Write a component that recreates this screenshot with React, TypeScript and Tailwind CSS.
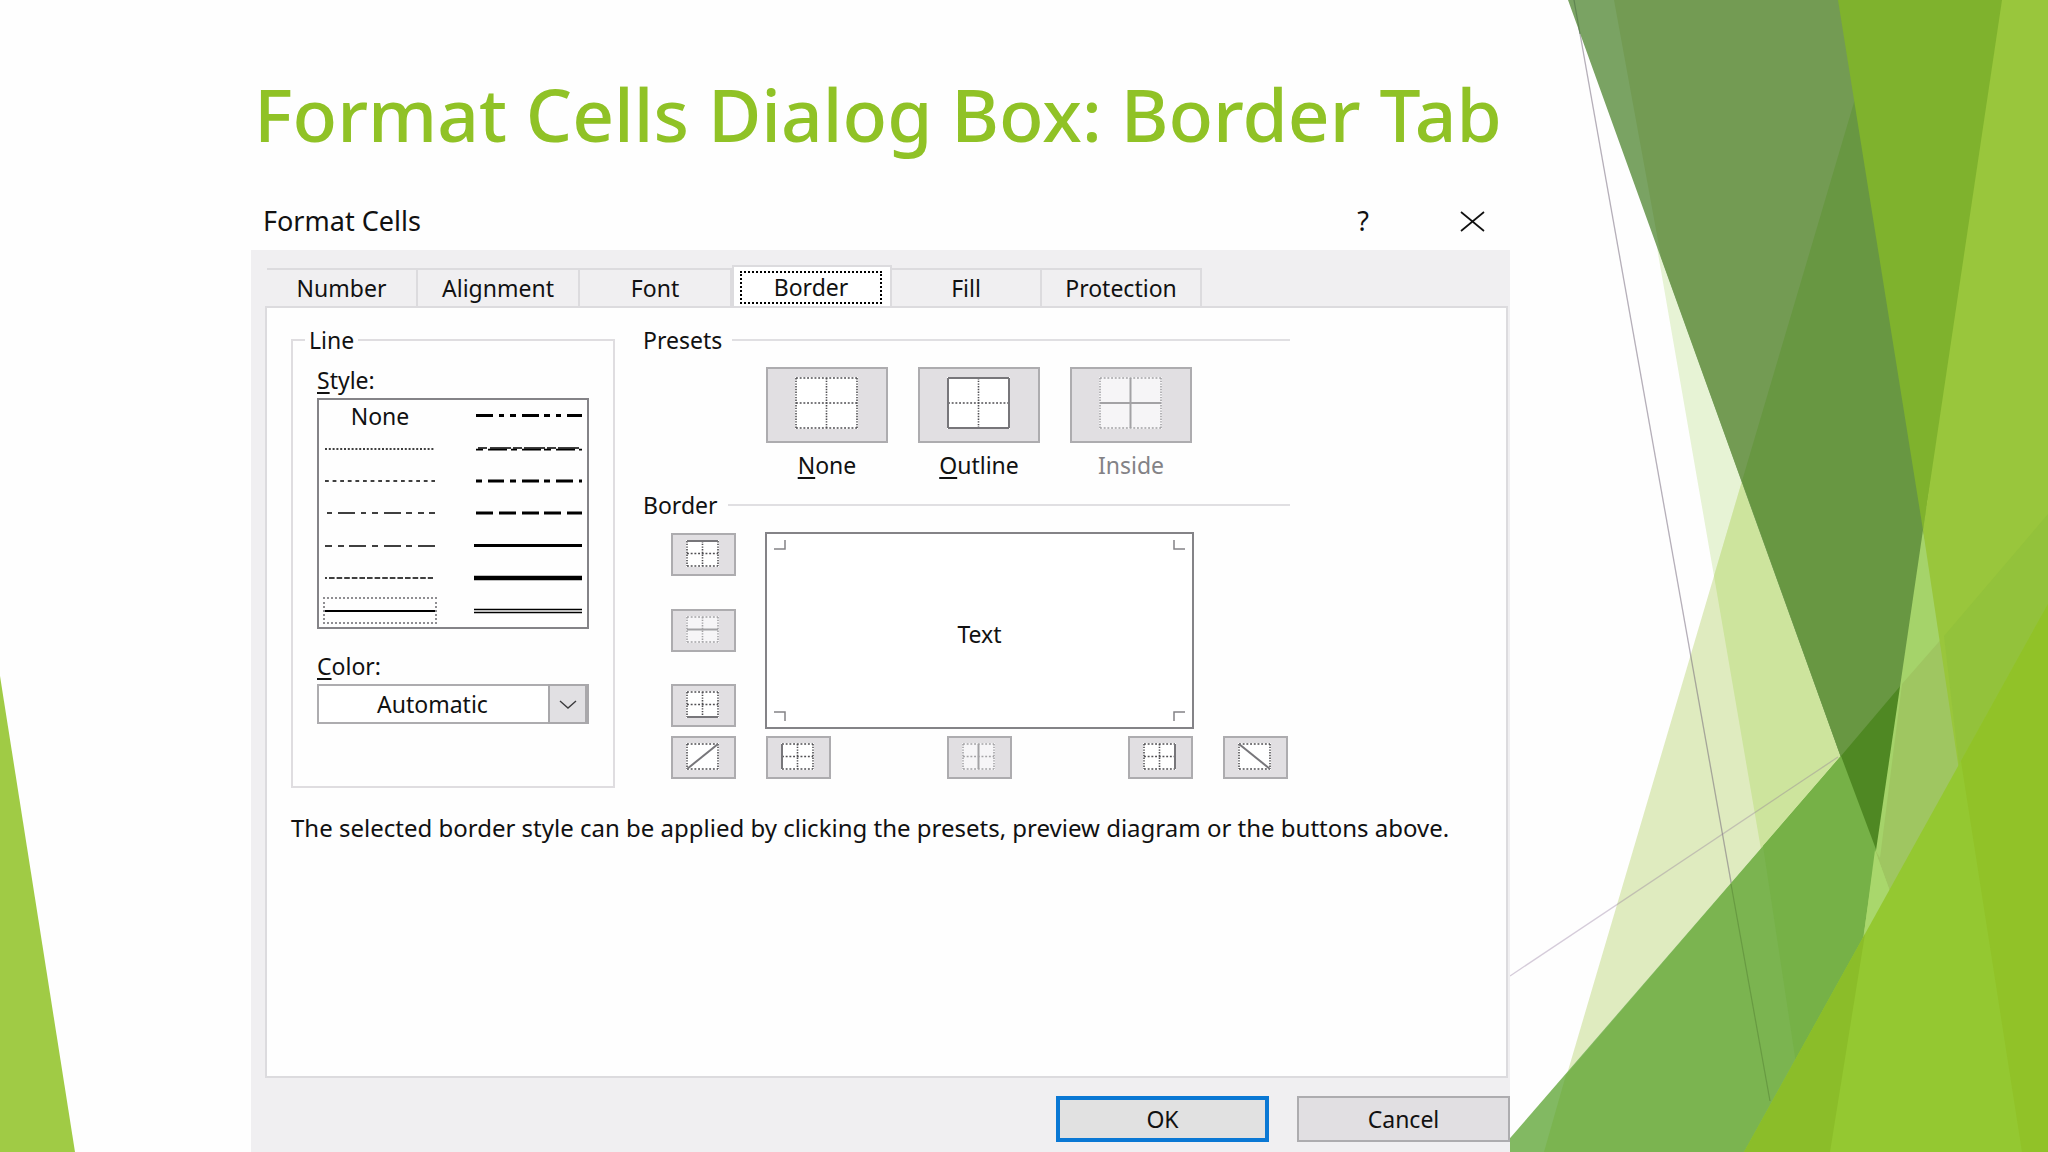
import React, { useState } from "react";

type Segment = [number, number];

interface Stroke {
  y: number;
  weight: number;
  segments: Segment[];
}

interface LineStyle {
  name: string;
  strokes: Stroke[];
}

function repeat(from: number, to: number, on: number, pitch: number): Segment[] {
  const out: Segment[] = [];
  for (let x = from; x < to; x += pitch) out.push([x, Math.min(x + on, to)]);
  return out;
}

const LINE_STYLES: LineStyle[] = [
  { name: "None", strokes: [] },
  { name: "Hair", strokes: [{ y: 16, weight: 1.4, segments: repeat(0, 110, 2, 3.8) }] },
  { name: "Dotted", strokes: [{ y: 16, weight: 1.5, segments: repeat(0, 110, 3.8, 7.6) }] },
  {
    name: "Thin dash dot dot",
    strokes: [
      { y: 16, weight: 1.4, segments: [[2, 7], [13, 30], [36, 41], [47, 53], [59, 76], [81, 87], [93, 99], [104, 110]] },
    ],
  },
  {
    name: "Thin dash dot",
    strokes: [
      { y: 16, weight: 1.4, segments: [[0, 7], [13, 19], [24, 41], [47, 53], [59, 76], [81, 87], [93, 110]] },
    ],
  },
  { name: "Dashed", strokes: [{ y: 16, weight: 1.5, segments: [[0, 2], ...repeat(4, 108, 5.6, 7.6)] }] },
  { name: "Thin", strokes: [{ y: 16, weight: 1.8, segments: [[0, 110]] }] },
  {
    name: "Medium dash dot dot",
    strokes: [
      { y: 15.5, weight: 3, segments: [[2, 19], [25, 30], [36, 42], [48, 65], [70, 76], [82, 87], [93, 108]] },
    ],
  },
  {
    name: "Slanted dash dot",
    strokes: [
      { y: 15, weight: 1.6, segments: [[4, 13], [16, 37], [39, 48], [50, 71], [73, 82], [84, 105]] },
      { y: 16.6, weight: 1.6, segments: [[2, 9], [14, 33], [37, 43], [48, 67], [70, 77], [82, 101], [105, 108]] },
    ],
  },
  {
    name: "Medium dash dot",
    strokes: [
      { y: 16, weight: 3, segments: [[2, 8], [14, 30], [36, 42], [48, 65], [70, 76], [82, 99], [105, 108]] },
    ],
  },
  {
    name: "Medium dashed",
    strokes: [{ y: 16, weight: 3.2, segments: [[2, 19], [25, 42], [48, 65], [70, 87], [93, 108]] }],
  },
  { name: "Medium", strokes: [{ y: 15.5, weight: 3, segments: [[0, 108]] }] },
  { name: "Thick", strokes: [{ y: 16, weight: 4.4, segments: [[0, 108]] }] },
  {
    name: "Double",
    strokes: [
      { y: 14.5, weight: 1.5, segments: [[0, 108]] },
      { y: 17.5, weight: 1.5, segments: [[0, 108]] },
    ],
  },
];

function LineSample({ style }: { style: LineStyle }) {
  return (
    <svg width="110" height="32" viewBox="0 0 110 32" aria-hidden="true">
      {style.strokes.map((s, i) => (
        <path
          key={i}
          d={s.segments.map(([a, b]) => `M${a} ${s.y}H${b}`).join("")}
          stroke="#000"
          strokeWidth={s.weight}
        />
      ))}
    </svg>
  );
}

type Edge = "top" | "bottom" | "left" | "right" | "midH" | "midV" | "up" | "down";

function CellIcon({ w, h, solid, faded = false }: { w: number; h: number; solid: Edge[]; faded?: boolean }) {
  const x1 = w - 1;
  const y1 = h - 1;
  const cx = w / 2;
  const cy = h / 2;
  const diagonal = solid.includes("up") || solid.includes("down");
  const paths: Record<Edge, string> = {
    top: `M1 1H${x1}`,
    bottom: `M1 ${y1}H${x1}`,
    left: `M1 1V${y1}`,
    right: `M${x1} 1V${y1}`,
    midH: `M1 ${cy}H${x1}`,
    midV: `M${cx} 1V${y1}`,
    up: `M1 ${y1}L${x1} 1`,
    down: `M1 1L${x1} ${y1}`,
  };
  const grid: Edge[] = diagonal
    ? ["top", "bottom", "left", "right"]
    : ["top", "bottom", "left", "right", "midH", "midV"];
  const dark = faded ? "#a3a2a5" : "#4f4e52";
  const line = faded ? "#a3a2a5" : "#77767a";
  return (
    <svg width={w} height={h} viewBox={`0 0 ${w} ${h}`} aria-hidden="true">
      <rect x="0" y="0" width={w} height={h} fill={faded ? "#f6f5f7" : "#ffffff"} />
      {grid
        .filter((e) => !solid.includes(e))
        .map((e) => (
          <path
            key={e}
            d={paths[e]}
            stroke={dark}
            strokeWidth="1.6"
            strokeDasharray={e === "left" || e === "right" || e === "midV" ? "1.4 1.3" : "1.9 1.8"}
          />
        ))}
      {solid.map((e) => (
        <path key={e} d={paths[e]} stroke={line} strokeWidth={2} />
      ))}
    </svg>
  );
}

function Backdrop() {
  return (
    <svg
      className="absolute inset-0 h-full w-full"
      viewBox="0 0 2048 1152"
      preserveAspectRatio="none"
      aria-hidden="true"
    >
      <polygon points="0,676 75,1152 0,1152" fill="#a0cb45" />
      {/* pale bands */}
      <polygon points="1614,0 1714,576 1813,1152 2048,1152 2048,0" fill="#e7f3d5" />
      <polygon points="1884,0 1544,1152 2048,1152 2048,0" fill="#dfebbf" />
      <polygon points="1884,0 1714,576 1813,1152 2048,1152 2048,0" fill="#cde49d" />
      {/* thin rules */}
      <path d="M1574 0L1770 1101" stroke="#6b5f74" strokeOpacity="0.5" strokeWidth="1.3" />
      <path d="M1510 976L1838 757" stroke="#8a6f98" strokeOpacity="0.35" strokeWidth="1.3" />
      {/* dark wedge */}
      <polygon points="1568,0 1888,888 1970,760 1930,530 1845,0" fill="#7aa363" />
      <polygon points="1614,0 1661,257 1888,888 1970,760 1930,530 1845,0" fill="#739b53" />
      <polygon points="1855,99 1742,481 1888,888 1970,760 1930,530" fill="#689742" />
      <path d="M1574 0L1580 34" stroke="#4f6f46" strokeOpacity="0.6" strokeWidth="1.2" />
      {/* lower green wedge */}
      <polygon points="1498,1152 1841,756 1895,892 1874,934 1760,1152" fill="#82b962" />
      <polygon points="1566,1075 1841,756 1895,892 1874,934 1760,1152 1544,1152" fill="#7bb450" />
      <polygon points="1763,846 1841,756 1895,892 1874,934 1797,1070" fill="#76b147" />
      <path d="M1731 884L1770 1101" stroke="#5f8f3c" strokeOpacity="0.7" strokeWidth="1.2" />
      <polygon points="1841,756 1902,684 1880,860" fill="#4f8823" />
      {/* right hand bands */}
      <polygon points="1838,0 2010,0 1923,530" fill="#7fb22d" />
      <polygon points="1923,530 1975,780 1857,980" fill="#a5d36a" />
      <polygon points="1902,684 1944,636 1980,760 1895,905 1875,850 1880,858" fill="#9fc661" />
      <polygon points="1875,850 1895,905 1864,934" fill="#a9d76c" />
      <polygon points="2002,0 2048,0 2048,640 1962,790 1923,530" fill="#99c63c" />
      <polygon points="1944,636 2048,514 2048,640 1962,790" fill="#93c23b" />
      {/* foreground triangle */}
      <polygon points="1744,1152 2048,604 2048,1152" fill="#94c831" />
      <polygon points="1744,1152 1865,934 1830,1152" fill="#8bbd29" />
      <polygon points="1961,761 2048,604 2048,1152 2022,1152" fill="#91c228" />
    </svg>
  );
}

const TABS = [
  { name: "Number", width: "w-[151px]" },
  { name: "Alignment", width: "w-[162px]" },
  { name: "Font", width: "w-[152px]" },
  { name: "Border", width: "w-[160px]" },
  { name: "Fill", width: "w-[150px]" },
  { name: "Protection", width: "w-[160px]" },
];

function Tabs() {
  const [active, setActive] = useState("Border");
  return (
    <div role="tablist" className="-mb-0.5 flex h-[43px] items-end pl-0.5">
      {TABS.map(({ name, width }) =>
        name === active ? (
          <button
            key={name}
            role="tab"
            aria-selected="true"
            className={`${width} h-[43px] border-2 border-b-0 border-[#dcdbde] bg-white py-1 pl-1.5 pr-2`}
          >
            <span className="flex h-full items-center justify-center border-2 border-dotted border-black pb-0.5">
              {name}
            </span>
          </button>
        ) : (
          <button
            key={name}
            role="tab"
            aria-selected="false"
            onClick={() => setActive(name)}
            className={`${width} h-10 border-2 border-l-0 border-[#dcdbde]`}
          >
            {name}
          </button>
        )
      )}
    </div>
  );
}

function LineGroup() {
  const [picked, setPicked] = useState("Thin");
  return (
    <fieldset className="h-[462px] w-[324px] border-2 border-[#dfdde0] pl-6">
      <legend className="-ml-3 px-1 leading-7">Line</legend>
      <div id="style-label" className="mt-3 leading-7">
        <u className="underline-offset-3">S</u>tyle:
      </div>
      <div
        role="listbox"
        aria-labelledby="style-label"
        className="mt-1 grid h-[231px] w-[272px] grid-flow-col grid-cols-[149px_1fr] grid-rows-7 border-2 border-[#848387] pl-1"
      >
        {LINE_STYLES.map((style) => (
          <button
            key={style.name}
            role="option"
            aria-label={style.name}
            aria-selected={picked === style.name}
            onClick={() => setPicked(style.name)}
            className="flex w-[114px] items-center justify-center"
          >
            {style.strokes.length === 0 ? (
              <span>{style.name}</span>
            ) : picked === style.name ? (
              <span className="flex h-[27px] w-[114px] items-center justify-center border-2 border-dotted border-[#8f8e92]">
                <LineSample style={style} />
              </span>
            ) : (
              <LineSample style={style} />
            )}
          </button>
        ))}
      </div>
      <label htmlFor="line-color" className="mt-[23px] block leading-7">
        <u className="underline-offset-3">C</u>olor:
      </label>
      <div className="relative mt-1 w-[272px]">
        <select
          id="line-color"
          className="h-10 w-full appearance-none border-2 border-[#adacaf] bg-white pr-[41px] text-center [text-align-last:center]"
        >
          <option>Automatic</option>
        </select>
        <span className="pointer-events-none absolute inset-y-0 right-0 flex w-[41px] items-center justify-center border-2 border-r-4 border-[#a9a8ab] bg-[#e1e0e3]">
          <svg width="18" height="9" viewBox="0 0 18 9" fill="none" stroke="#3c3c3e" strokeWidth="1.4" aria-hidden="true">
            <path d="M1 1L9 8L17 1" />
          </svg>
        </span>
      </div>
    </fieldset>
  );
}

function Heading({ children }: { children: React.ReactNode }) {
  return (
    <div className="flex items-center gap-2.5 leading-7">
      <h3>{children}</h3>
      <span className="h-0.5 flex-1 bg-[#e0dfe2]" />
    </div>
  );
}

function Preset({ id, first, rest, solid, faded }: { id: string; first: string; rest: string; solid: Edge[]; faded?: boolean }) {
  return (
    <div className="flex w-[122px] flex-col items-center">
      <button
        id={id}
        disabled={faded}
        className="flex h-[76px] w-full items-center justify-center border-2 border-[#adacaf] bg-[#e1dfe2] pb-1 pr-0.5"
      >
        <CellIcon w={63} h={52} solid={solid} faded={faded} />
      </button>
      <label htmlFor={id} className={faded ? "mt-2 leading-7 text-[#838286]" : "mt-2 leading-7"}>
        {faded ? first : <u className="underline-offset-3">{first}</u>}
        {rest}
      </label>
    </div>
  );
}

function EdgeButton({ label, solid, faded }: { label: string; solid: Edge[]; faded?: boolean }) {
  return (
    <button
      aria-label={label}
      disabled={faded}
      className="flex h-[43px] w-[65px] items-center justify-center border-2 border-[#adacaf] bg-[#e1dfe2] pb-0.5 pr-0.5"
    >
      <CellIcon w={33} h={27} solid={solid} faded={faded} />
    </button>
  );
}

function Corner({ d }: { d: string }) {
  return (
    <svg width="12" height="10" viewBox="0 0 12 10" fill="none" stroke="#848387" strokeWidth="1.5" aria-hidden="true">
      <path d={d} />
    </svg>
  );
}

function Preview() {
  return (
    <button
      aria-label="Preview diagram"
      className="flex h-[197px] flex-col justify-between border-2 border-[#848387] bg-white px-[7px] py-1.5"
    >
      <span className="flex w-full justify-between">
        <Corner d="M0 9H11V0" />
        <Corner d="M12 9H1V0" />
      </span>
      <span className="w-full pt-1.5 text-center">Text</span>
      <span className="flex w-full justify-between">
        <Corner d="M0 1H11V10" />
        <Corner d="M12 1H1V10" />
      </span>
    </button>
  );
}

function BorderGroups() {
  return (
    <div className="max-w-[647px] flex-1">
      <Heading>Presets</Heading>
      <div className="mt-[13px] flex justify-center gap-[30px] pl-[25px]">
        <Preset id="preset-none" first="N" rest="one" solid={[]} />
        <Preset id="preset-outline" first="O" rest="utline" solid={["top", "bottom", "left", "right"]} />
        <Preset id="preset-inside" first="I" rest="nside" solid={["midH", "midV"]} faded />
      </div>
      <div className="mt-3">
        <Heading>Border</Heading>
      </div>
      <div className="mt-[13px] grid grid-cols-[65px_1fr_65px] gap-x-[29px] gap-y-[7px] pl-7 pr-0.5">
        <div className="flex flex-col justify-between pb-0.5 pt-px">
          <EdgeButton label="Top border" solid={["top"]} />
          <EdgeButton label="Horizontal inside border" solid={["midH"]} faded />
          <EdgeButton label="Bottom border" solid={["bottom"]} />
        </div>
        <Preview />
        <span />
        <EdgeButton label="Diagonal up border" solid={["up"]} />
        <div className="flex justify-between px-px">
          <EdgeButton label="Left border" solid={["left"]} />
          <EdgeButton label="Vertical inside border" solid={["midV"]} faded />
          <EdgeButton label="Right border" solid={["right"]} />
        </div>
        <EdgeButton label="Diagonal down border" solid={["down"]} />
      </div>
    </div>
  );
}

export default function App() {
  return (
    <main className="relative flex min-h-screen flex-col overflow-hidden bg-[#fefefe] font-['Noto_Sans',sans-serif] text-[23px] leading-7 text-[#111]">
      <Backdrop />
      <div className="relative ml-[251px] mr-[538px] flex flex-1 flex-col">
        <h1 className="whitespace-nowrap pl-[3px] pt-14 text-[73px] font-medium leading-[116px] text-[#90c226]">
          Format Cells Dialog Box: Border Tab
        </h1>
        <section role="dialog" aria-labelledby="dialog-title" className="mt-5 flex flex-1 flex-col">
          <header className="flex h-[58px] items-center pl-3 text-[27px]">
            <h2 id="dialog-title" className="flex-1">
              Format Cells
            </h2>
            <button aria-label="Help" className="w-10">
              ?
            </button>
            <button aria-label="Close" className="ml-[69px] mr-[18px] flex w-10 justify-center">
              <svg width="25" height="21" viewBox="0 0 25 21" stroke="#111" strokeWidth="1.7" aria-hidden="true">
                <path d="M1 1L24 20M24 1L1 20" />
              </svg>
            </button>
          </header>
          <div className="flex flex-1 flex-col bg-[#f0eff1] pl-3.5 pt-[15px]">
            <Tabs />
            <div role="tabpanel" className="mr-0.5 flex h-[772px] flex-col border-2 border-[#dcdbde] bg-[#fefefe] pl-6 pt-[18px]">
              <div className="flex gap-7">
                <LineGroup />
                <BorderGroups />
              </div>
              <p className="mt-[26px] whitespace-nowrap text-2xl leading-7">
                The selected border style can be applied by clicking the presets, preview diagram or the buttons above.
              </p>
            </div>
            <footer className="mt-[18px] flex justify-end gap-7 pb-2.5">
              <button className="h-[46px] w-[213px] border-4 border-[#0a78d4] bg-[#e1e1e1]">OK</button>
              <button className="h-[46px] w-[213px] border-2 border-[#adacaf] bg-[#e1dfe2]">Cancel</button>
            </footer>
          </div>
        </section>
      </div>
    </main>
  );
}
